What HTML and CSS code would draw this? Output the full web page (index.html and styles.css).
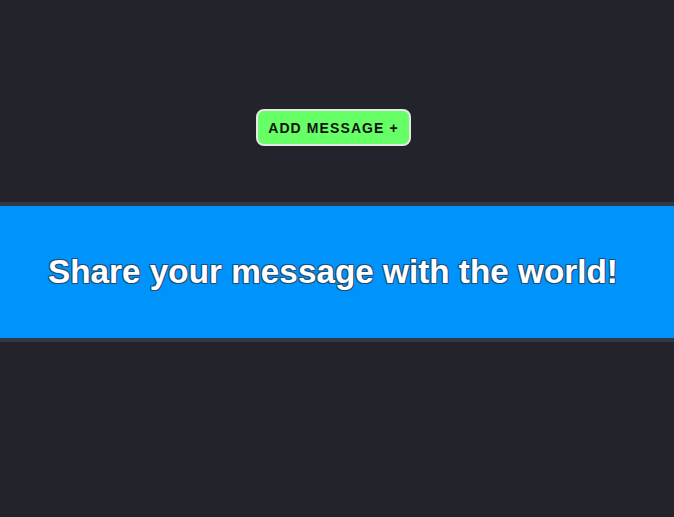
FILE: index.html
```html
<!DOCTYPE html>
<html>
<head>
<meta charset="utf-8">
<link rel="stylesheet" href="styles.css">
</head>
<body>
<div class="top">
  <button class="add-btn">ADD MESSAGE +</button>
</div>
<section class="banner">
  <h1 class="banner-title">Share your message with the world!</h1>
</section>
</body>
</html>
```
FILE: styles.css
```css
html, body {
  margin: 0;
  padding: 0;
  background: #22232b;
  font-family: "Liberation Sans", Arial, sans-serif;
  height: 100%;
}
.top {
  height: 202px;
  display: flex;
  justify-content: center;
  padding: 109px 8px 0 0;
  box-sizing: border-box;
}
.add-btn {
  height: 37px;
  width: 155px;
  background: #66ff66;
  border: 2px solid #e6e6e6;
  border-radius: 8px;
  font-family: "Liberation Sans", Arial, sans-serif;
  font-weight: bold;
  font-size: 14px;
  letter-spacing: 1.1px;
  color: #111;
  padding: 0;
  margin-left: 1px;
}
.banner {
  background: #0093fb;
  border-top: 4px solid #343843;
  border-bottom: 4px solid #343843;
  height: 132px;
  display: flex;
  align-items: center;
  justify-content: center;
  padding-right: 8px;
}
.banner-title {
  margin: 0;
  color: #fff;
  font-size: 33.3px;
  font-weight: bold;
  text-shadow: -1px -1px 0 #1d4f7a, 1px -1px 0 #1d4f7a, -1px 1px 0 #1d4f7a, 1px 1px 0 #1d4f7a;
}
```
